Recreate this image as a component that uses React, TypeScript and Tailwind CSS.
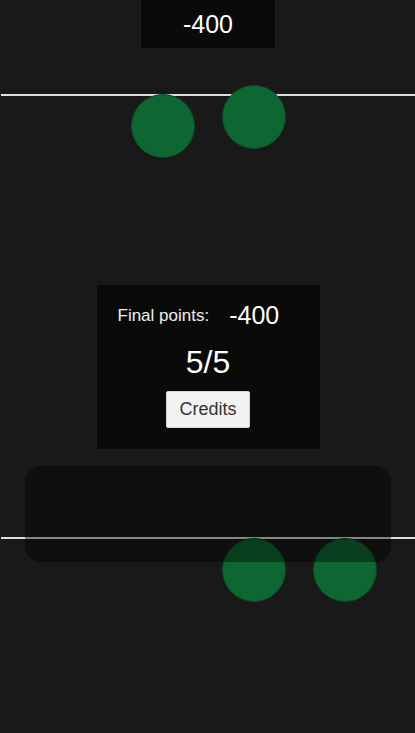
import React from 'react';

type Ball = { x: number; y: number };

const BALLS: Ball[] = [
    { x: 163, y: 126 },
    { x: 254, y: 117 },
    { x: 254, y: 570 },
    { x: 345, y: 570 },
];

const LINES = [93.5, 536.5];

export default function App() {
    return (
        <div
            className="relative h-[733px] w-full overflow-hidden bg-[#191919] text-white"
            style={{ fontFamily: '"Liberation Sans", Arial, sans-serif' }}
        >
            {/* Score */}
            <div className="flex justify-center">
                <div className="ml-[1px] flex h-[48px] w-[134px] items-center justify-center bg-[#0a0a0a] text-[25px] leading-none">
                    -400
                </div>
            </div>

            {/* Track lines */}
            {LINES.map((y) => (
                <div
                    key={y}
                    className="absolute left-[1px] right-0 h-[2px] bg-[#dedede]"
                    style={{ top: y }}
                />
            ))}

            {/* Balls */}
            {BALLS.map((b, i) => (
                <div
                    key={i}
                    className="absolute h-[64px] w-[64px] -translate-x-1/2 -translate-y-1/2 rounded-full border border-[#0a4d25] bg-[#0e6632]"
                    style={{ left: b.x, top: b.y }}
                />
            ))}

            {/* Dimmed panel at bottom */}
            <div className="absolute left-[25px] top-[466px] h-[96px] w-[366px] rounded-[16px] bg-black/40" />

            {/* Game over modal */}
            <div className="absolute inset-0 flex items-center justify-center">
                <div className="ml-[1px] flex h-[164px] w-[223px] flex-col bg-[#0a0a0a] pl-[21px] pt-[12px]">
                    <div className="flex items-center gap-[20px]">
                        <span className="text-[17px] text-[#eee]">Final points:</span>
                        <span className="text-[25px]">-400</span>
                    </div>
                    <div className="-ml-[21px] mt-[10px] flex flex-col items-center">
                        <span className="text-[32px] leading-[36px]">5/5</span>
                        <button className="mt-[11px] h-[37px] rounded-[2px] border border-[#d6d6d6] bg-[#f2f2f2] px-[12px] text-[18px] text-[#333]">
                            Credits
                        </button>
                    </div>
                </div>
            </div>
        </div>
    );
}
